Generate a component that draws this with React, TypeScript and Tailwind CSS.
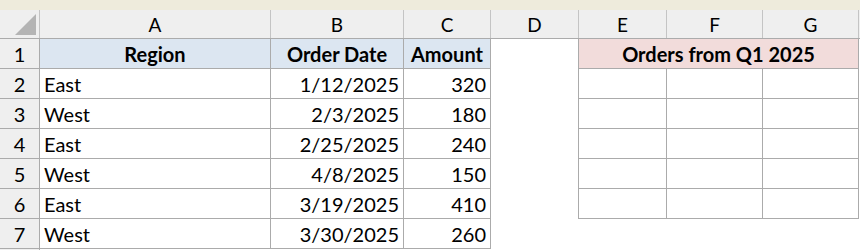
const cols = [
  { key: 'A', w: 'w-[231px]' },
  { key: 'B', w: 'w-[133px]' },
  { key: 'C', w: 'w-[87px]' },
  { key: 'D', w: 'w-[88px]' },
  { key: 'E', w: 'w-[88px]' },
  { key: 'F', w: 'w-[96px]' },
  { key: 'G', w: 'w-[96px]' },
];

const orders = [
  { region: 'East', date: '1/12/2025', amount: 320 },
  { region: 'West', date: '2/3/2025', amount: 180 },
  { region: 'East', date: '2/25/2025', amount: 240 },
  { region: 'West', date: '4/8/2025', amount: 150 },
  { region: 'East', date: '3/19/2025', amount: 410 },
  { region: 'West', date: '3/30/2025', amount: 260 },
];

const line = 'border-[#ababab]';

function RowNum({ n }: { n?: number }) {
  return (
    <div className={`w-[40px] h-[30px] shrink-0 bg-[#efefef] border-r border-b ${line} flex items-center justify-center`}>
      {n}
    </div>
  );
}

export default function App() {
  return (
    <div
      className="w-[860px] h-[250px] overflow-hidden bg-white text-black text-[20px] leading-none"
      style={{ fontFamily: 'Lato, "Open Sans", sans-serif' }}
    >
      <div className="h-[10px] bg-[#eeebdc]" />

      {/* column headers */}
      <div className={`flex h-[29px] bg-[#efefef] border-b ${line}`}>
        <div className="w-[40px] shrink-0 border-r border-[#c4c4c4] relative">
          <div
            className="absolute left-[15px] top-[4px] w-[21px] h-[21px] bg-[#b4b4b4]"
            style={{ clipPath: 'polygon(100% 0, 100% 100%, 0 100%)' }}
          />
        </div>
        {cols.map((c) => (
          <div
            key={c.key}
            className={`${c.w} shrink-0 border-r border-[#c4c4c4] flex items-center justify-center text-[19px]`}
          >
            {c.key}
          </div>
        ))}
      </div>

      {/* row 1: headers */}
      <div className="flex">
        <RowNum n={1} />
        <div className={`w-[231px] h-[30px] bg-[#dce6f1] border-r border-b ${line} flex items-center justify-center font-bold`}>Region</div>
        <div className={`w-[133px] h-[30px] bg-[#dce6f1] border-r border-b ${line} flex items-center justify-center font-bold`}>Order Date</div>
        <div className={`w-[87px] h-[30px] bg-[#dce6f1] border-r border-b ${line} flex items-center justify-center font-bold`}>Amount</div>
        <div className={`w-[88px] h-[30px] border-r ${line}`} />
        <div className={`w-[280px] h-[30px] bg-[#f2dcdb] border-r border-b ${line} flex items-center justify-center font-bold`}>Orders from Q1 2025</div>
      </div>

      {orders.map((o, i) => (
        <div key={i} className="flex">
          <RowNum n={i + 2} />
          <div className={`w-[231px] h-[30px] border-r border-b ${line} flex items-center pl-[4px]`}>{o.region}</div>
          <div className={`w-[133px] h-[30px] border-r border-b ${line} flex items-center justify-end pr-[4px]`}>{o.date}</div>
          <div className={`w-[87px] h-[30px] border-r border-b ${line} flex items-center justify-end pr-[4px]`}>{o.amount}</div>
          <div className={`w-[88px] h-[30px] ${i < 5 ? `border-r ${line}` : ''}`} />
          {i < 5 && (
            <>
              <div className={`w-[88px] h-[30px] border-r border-b ${line}`} />
              <div className={`w-[96px] h-[30px] border-r border-b ${line}`} />
              <div className={`w-[96px] h-[30px] border-r border-b ${line}`} />
            </>
          )}
        </div>
      ))}

      <div className="flex">
        <RowNum />
      </div>
    </div>
  );
}
